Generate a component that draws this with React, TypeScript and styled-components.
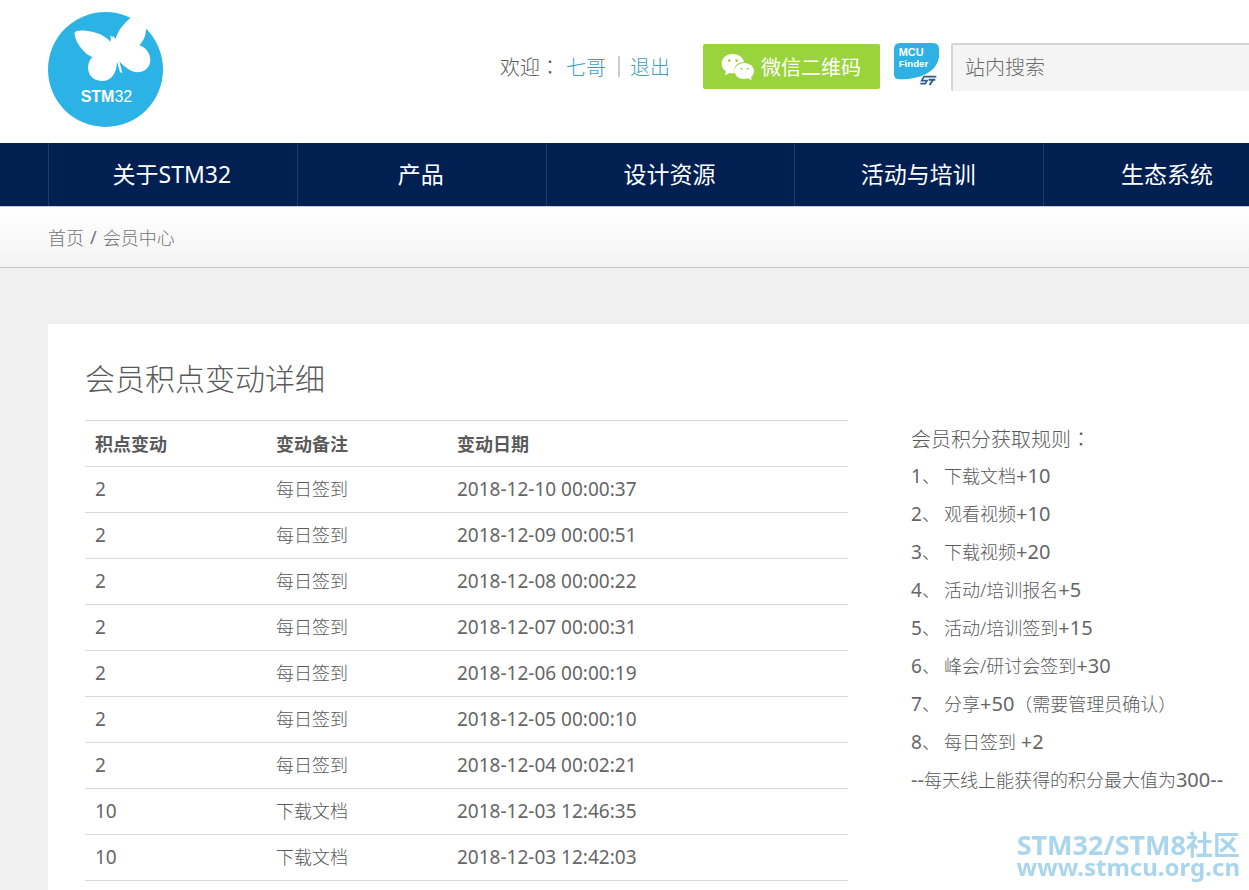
import React from 'react';
import styled, { createGlobalStyle } from 'styled-components';

const GlobalStyle = createGlobalStyle`
  * { box-sizing: border-box; }
  html { background: #f0f0f0; }
  body {
    margin: 0;
    overflow-x: hidden;
    background: #f0f0f0;
    color: #5a5a5a;
    font-family: "Noto Sans", "Noto Sans CJK SC", sans-serif;
    font-size: 18px;
    font-weight: 300;
  }
  a { text-decoration: none; color: inherit; }
`;

const Header = styled.header`
  display: flex;
  align-items: flex-start;
  height: 143px;
  padding: 12px 0 0 48px;
  background: #fff;
`;

const LogoLink = styled.a`
  flex: none;
  width: 452px;
  svg { display: block; }
`;

const Welcome = styled.div`
  display: flex;
  flex: none;
  align-items: center;
  width: 203px;
  height: 48px;
  margin-top: 30px;
  font-size: 20px;
  white-space: nowrap;
`;

const Colon = styled.span`
  font-family: "Noto Sans CJK TC", sans-serif;
`;

const UserLink = styled.a`
  color: #3f9cc0;
`;

const UserName = styled(UserLink)`
  margin-left: 6px;
`;

const Divider = styled.span`
  width: 2px;
  height: 21px;
  margin: 0 10px 0 12px;
  background: #ccc;
`;

const WechatButton = styled.button`
  display: flex;
  flex: none;
  align-items: center;
  gap: 7px;
  width: 177px;
  height: 45px;
  margin-top: 32px;
  padding: 0 0 0 18px;
  border: 0;
  border-radius: 2px;
  background: #9ad43c;
  color: #fff;
  font: 400 20px "Noto Sans", "Noto Sans CJK SC", sans-serif;
  white-space: nowrap;
`;

const FinderLink = styled.a`
  flex: none;
  margin: 31px 12px 0 14px;
  svg { display: block; }
`;

const Search = styled.input`
  flex: 1;
  min-width: 0;
  height: 48px;
  margin-top: 31px;
  padding: 0 12px 2px;
  border: solid #d4d4d4;
  border-width: 2px 0 0 2px;
  border-radius: 2px 0 0 2px;
  background: #f4f4f4;
  outline: 0;
  color: #666;
  font: 300 20px "Noto Sans", "Noto Sans CJK SC", sans-serif;
  &::placeholder { color: #6a6a6a; opacity: 1; }
`;

const Nav = styled.nav`
  height: 63px;
  padding-left: 48px;
  overflow: hidden;
  background: #002052;
`;

const NavList = styled.div`
  display: grid;
  grid-template-columns: repeat(5, 1fr);
  width: 1244px;
  height: 100%;
`;

const NavLink = styled.a`
  display: flex;
  align-items: center;
  justify-content: center;
  padding: 0 2px 3px 0;
  border-left: 1px solid #123f70;
  color: #fff;
  font-size: 23px;
  font-weight: 400;
`;

const Breadcrumb = styled.nav`
  display: flex;
  align-items: center;
  gap: 6px;
  height: 62px;
  padding: 0 48px;
  border-top: 1px solid #c9ccd3;
  border-bottom: 1px solid #c6cbca;
  background: linear-gradient(#fff, #f3f3f3);
  color: #747474;
`;

const Slash = styled.span`
  font-weight: 400;
`;

const Card = styled.main`
  display: flex;
  min-height: 600px;
  margin: 56px 0 0 48px;
  padding: 35px 0 40px 37px;
  background: #fff;
`;

const History = styled.section`
  flex: none;
  width: 763px;
`;

const Title = styled.h1`
  margin: 0 0 21px;
  font-size: 30px;
  line-height: 40px;
  font-weight: 300;
`;

const Table = styled.table`
  width: 100%;
  table-layout: fixed;
  border-collapse: collapse;
  border-bottom: 1px solid #d8d8d8;
`;

const Th = styled.th<{ $width?: number }>`
  width: ${(p) => (p.$width ? `${p.$width}px` : 'auto')};
  height: 46px;
  padding: 0 10px 2px;
  border-top: 1px solid #d8d8d8;
  text-align: left;
  font-weight: 700;
`;

const Td = styled.td<{ $numeric?: boolean }>`
  height: 46px;
  padding: 0 10px 2px;
  border-top: 1px solid #d8d8d8;
  color: ${(p) => (p.$numeric ? '#666' : '#5a5a5a')};
  font-size: ${(p) => (p.$numeric ? 19 : 18)}px;
  font-weight: ${(p) => (p.$numeric ? 400 : 300)};
  line-height: 24px;
`;

const Rules = styled.section`
  flex: 1;
  min-width: 0;
  margin: 62px 0 0 63px;
  line-height: 38px;
  white-space: nowrap;
`;

const RulesTitle = styled.h2`
  margin: 0;
  font-size: 20px;
  line-height: 35px;
  font-weight: 300;
`;

const RuleList = styled.ol`
  margin: 0;
  padding: 0;
  list-style: none;
`;

const Rule = styled.li`
  display: flex;
  height: 38px;
`;

const RuleNumber = styled.span`
  flex: none;
  width: 33px;
`;

const Figure = styled.span`
  color: #666;
  font-size: 20px;
  font-weight: 400;
`;

const Ordinal = styled(Figure)`
  font-size: 19px;
`;

const RuleNote = styled.p`
  margin: 0;
`;

const Watermark = styled.div`
  position: fixed;
  right: 9px;
  bottom: 12px;
  color: #a9d6ed;
  font-weight: 700;
  line-height: 22px;
  text-align: right;
  white-space: nowrap;
`;

const Community = styled.div`
  font-size: 27px;
`;

const Site = styled.div`
  font-size: 24px;
`;

const Logo = () => (
  <svg width="115" height="115" viewBox="54 36 345 345" aria-label="STM32">
    <circle cx="226.500" cy="208.500" r="172.500" fill="#2bb3e6" />
    <path
      fill="#fff"
      d="M134 98C138 86 200 92 226 112C235 118 238 122 240 125L243 118L240 106L247 112L252 107L253 115L258 114C264 92 282 70 304 52L330 20L380 50L348 88C347 110 340 124 328 136C348 142 361 160 361 181C360 203 344 217 320 217C300 215 281 199 268 184L277 220L270 216L261 185C260 222 242 243 216 243C188 242 174 224 174 201C175 188 180 177 188 171C160 162 132 120 134 98Z"
    />
    <text x="152" y="307" fill="#fff" fontFamily="'Liberation Sans', sans-serif" fontSize="48" fontWeight="700">
      STM<tspan fontWeight="400">32</tspan>
    </text>
  </svg>
);

const WechatIcon = () => (
  <svg width="33" height="28" viewBox="0 0 99 84" aria-hidden="true">
    <path fill="#fff" d="M35 3C16 3 2 15 2 32C2 42 7 50 15 55L12 67L26 60Q34 62 42 60C36 38 52 27 69 27C66 13 52 3 35 3Z" />
    <path fill="#fff" d="M70 30C53 30 41 41 41 54C41 69 54 78 70 78Q76 78 81 76L92 82L90 72C96 68 99 61 99 54C99 41 86 30 70 30Z" />
    <g fill="#9ad43c">
      <circle cx="25" cy="23" r="4" />
      <circle cx="47" cy="23" r="4" />
      <circle cx="61" cy="47" r="3" />
      <circle cx="80" cy="47" r="3" />
    </g>
  </svg>
);

const FinderIcon = () => (
  <svg width="45" height="44" viewBox="0 0 135 132" aria-label="MCU Finder">
    <path fill="#2fb1e3" d="M18 0H117Q135 0 135 18V42C130 80 90 110 15 109Q0 109 0 94V18Q0 0 18 0Z" />
    <g fill="#fff" fontFamily="'Liberation Sans', sans-serif" fontWeight="700">
      <text x="14" y="38" fontSize="33">MCU</text>
      <text x="14" y="71" fontSize="29">Finder</text>
    </g>
    <g fill="none" stroke="#2c5f8e" strokeWidth="5">
      <path d="M127 101H90L83 113H99L94 122H79" />
      <path d="M104 110H124M117 110L107 126" strokeWidth="6" />
    </g>
  </svg>
);

const navItems = ['关于STM32', '产品', '设计资源', '活动与培训', '生态系统'];

const records: [string, string, string][] = [
  ['2', '每日签到', '2018-12-10 00:00:37'],
  ['2', '每日签到', '2018-12-09 00:00:51'],
  ['2', '每日签到', '2018-12-08 00:00:22'],
  ['2', '每日签到', '2018-12-07 00:00:31'],
  ['2', '每日签到', '2018-12-06 00:00:19'],
  ['2', '每日签到', '2018-12-05 00:00:10'],
  ['2', '每日签到', '2018-12-04 00:02:21'],
  ['10', '下载文档', '2018-12-03 12:46:35'],
  ['10', '下载文档', '2018-12-03 12:42:03'],
];

const rules: [string, string, string?][] = [
  ['下载文档', '+10'],
  ['观看视频', '+10'],
  ['下载视频', '+20'],
  ['活动/培训报名', '+5'],
  ['活动/培训签到', '+15'],
  ['峰会/研讨会签到', '+30'],
  ['分享', '+50', '（需要管理员确认）'],
  ['每日签到 ', '+2'],
];

export default function App() {
  return (
    <>
      <GlobalStyle />
      <Header>
        <LogoLink href="#"><Logo /></LogoLink>
        <Welcome>
          欢迎<Colon>：</Colon>
          <UserName href="#">七哥</UserName>
          <Divider />
          <UserLink href="#">退出</UserLink>
        </Welcome>
        <WechatButton type="button"><WechatIcon />微信二维码</WechatButton>
        <FinderLink href="#"><FinderIcon /></FinderLink>
        <Search type="search" aria-label="站内搜索" placeholder="站内搜索" />
      </Header>
      <Nav>
        <NavList>
          {navItems.map((item) => <NavLink key={item} href="#">{item}</NavLink>)}
        </NavList>
      </Nav>
      <Breadcrumb>
        <a href="#">首页</a>
        <Slash>/</Slash>
        <a href="#">会员中心</a>
      </Breadcrumb>
      <Card>
        <History>
          <Title>会员积点变动详细</Title>
          <Table>
            <thead>
              <tr>
                <Th $width={181}>积点变动</Th>
                <Th $width={181}>变动备注</Th>
                <Th>变动日期</Th>
              </tr>
            </thead>
            <tbody>
              {records.map(([points, note, date]) => (
                <tr key={date}>
                  <Td $numeric>{points}</Td>
                  <Td>{note}</Td>
                  <Td $numeric>{date}</Td>
                </tr>
              ))}
            </tbody>
          </Table>
        </History>
        <Rules>
          <RulesTitle>会员积分获取规则<Colon>：</Colon></RulesTitle>
          <RuleList>
            {rules.map(([label, points, note], i) => (
              <Rule key={label}>
                <RuleNumber><Ordinal>{i + 1}</Ordinal>、</RuleNumber>
                <span>{label}<Figure>{points}</Figure>{note}</span>
              </Rule>
            ))}
          </RuleList>
          <RuleNote><Figure>--</Figure>每天线上能获得的积分最大值为<Figure>300--</Figure></RuleNote>
        </Rules>
      </Card>
      <Watermark>
        <Community>STM32/STM8社区</Community>
        <Site>www.stmcu.org.cn</Site>
      </Watermark>
    </>
  );
}
